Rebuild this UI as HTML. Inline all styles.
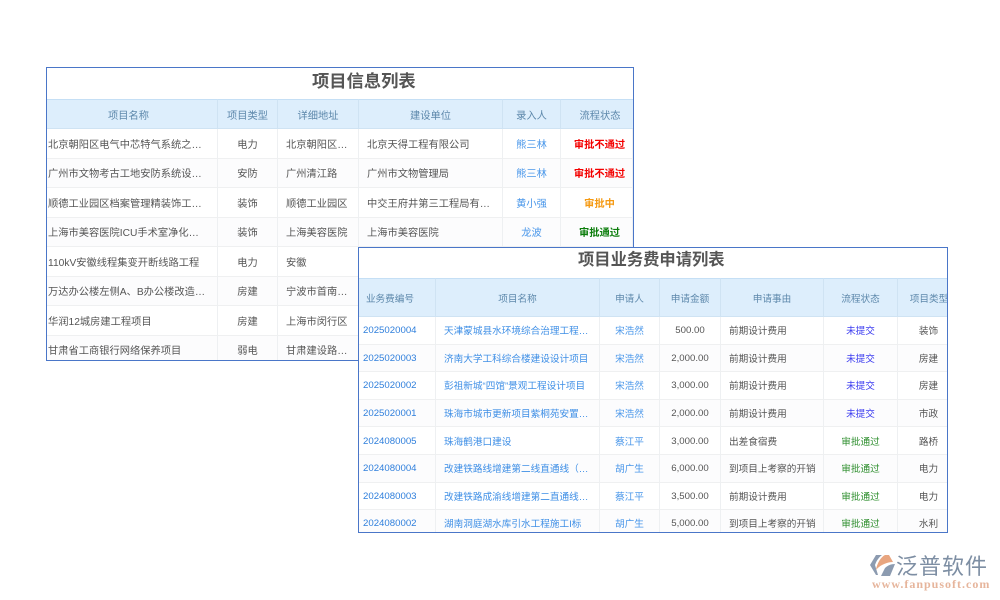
<!DOCTYPE html>
<html lang="zh">
<head>
<meta charset="utf-8">
<style>
html,body{margin:0;padding:0;background:#fff}
body{width:1000px;height:600px;position:relative;overflow:hidden;font-family:"Liberation Sans","Noto Sans CJK SC",sans-serif;font-size:10.2px;color:#555}
.box{position:absolute;box-sizing:border-box;border:1px solid #4a76c8;background:#fff;overflow:hidden}
.title{position:absolute;top:0;text-align:center;font-weight:bold;color:#555;white-space:nowrap}
table{position:absolute;left:0;border-collapse:separate;border-spacing:0;table-layout:fixed}
th{background:#ddeefc;font-weight:normal;color:#5d88ab;border-right:1px solid #cfe3f3;border-top:1px solid #c5dff5;border-bottom:1px solid #cfe3f3;padding:1px 0 0;overflow:hidden;white-space:nowrap;text-align:center}
td{border-right:1px solid #eef0f2;border-bottom:1px solid #eff0f1;padding:0 0 0 8px;white-space:nowrap;overflow:hidden;text-overflow:ellipsis;background:#fff}
tr:nth-child(even) td{background:#fcfcfd}
td.c{text-align:center;padding:0}
.l{color:#4a97ea}
.t1{font-size:10.25px}
.t2{font-size:9.65px}
.t1 td:first-child{padding-left:1px}
.t1 th:first-child{padding-right:7px}
.t1 th:last-child,.t1 td.c:last-child{padding-left:6px}
.t2 th:first-child{padding-right:14px}
.t2 th:last-child,.t2 td.c:last-child{padding-left:5px}
.t2 td.a{padding:1px 0 0 4px;color:#2f7fdc}
.t2 td.m{padding-top:1px}
.t2 td.n{padding-left:8px;color:#3f8fe6}
.r{color:#f40000;font-weight:bold}
.o{color:#f59a13;font-weight:bold}
.g{color:#0b7d0b;font-weight:bold}
.b{color:#3c3cf0}
.g2{color:#2f8f2f}
#logo{position:absolute;left:870px;top:555px}
.lt{position:absolute;left:896px;top:549px;font-size:22px;font-weight:normal;color:#7d8ea3;letter-spacing:1px;white-space:nowrap;font-family:"Liberation Sans","Noto Sans CJK SC",sans-serif}
.lu{position:absolute;left:872px;top:577px;font-family:"Liberation Serif","Noto Serif CJK SC",serif;font-size:12px;font-weight:bold;color:#e6b59c;letter-spacing:1px;white-space:nowrap}
</style>
</head>
<body>

<div class="box" style="left:46px;top:67px;width:588px;height:294px">
<div class="title" style="left:265px;font-size:17.3px;height:31px;line-height:27px">项目信息列表</div>
<table class="t1" style="top:31px;width:586px">
<colgroup><col style="width:171px"><col style="width:60px"><col style="width:81px"><col style="width:144px"><col style="width:58px"><col style="width:72px"></colgroup>
<thead><tr style="height:30px"><th>项目名称</th><th>项目类型</th><th>详细地址</th><th>建设单位</th><th>录入人</th><th style="border-right:0">流程状态</th></tr></thead>
<tbody>
<tr style="height:29.5px"><td>北京朝阳区电气中芯特气系统之…</td><td class="c">电力</td><td>北京朝阳区…</td><td>北京天得工程有限公司</td><td class="c l">熊三林</td><td class="c r">审批不通过</td></tr>
<tr style="height:29.5px"><td>广州市文物考古工地安防系统设…</td><td class="c">安防</td><td>广州清江路</td><td>广州市文物管理局</td><td class="c l">熊三林</td><td class="c r">审批不通过</td></tr>
<tr style="height:29.5px"><td>顺德工业园区档案管理精装饰工…</td><td class="c">装饰</td><td>顺德工业园区</td><td>中交王府井第三工程局有…</td><td class="c l">黄小强</td><td class="c o">审批中</td></tr>
<tr style="height:29.5px"><td>上海市美容医院ICU手术室净化…</td><td class="c">装饰</td><td>上海美容医院</td><td>上海市美容医院</td><td class="c l">龙波</td><td class="c g">审批通过</td></tr>
<tr style="height:29.5px"><td>110kV安徽线程集变开断线路工程</td><td class="c">电力</td><td>安徽</td><td></td><td></td><td></td></tr>
<tr style="height:29.5px"><td>万达办公楼左侧A、B办公楼改造…</td><td class="c">房建</td><td>宁波市首南…</td><td></td><td></td><td></td></tr>
<tr style="height:29.5px"><td>华润12城房建工程项目</td><td class="c">房建</td><td>上海市闵行区</td><td></td><td></td><td></td></tr>
<tr style="height:29.5px"><td>甘肃省工商银行网络保养项目</td><td class="c">弱电</td><td>甘肃建设路…</td><td></td><td></td><td></td></tr>
</tbody>
</table>
</div>

<div class="box" style="left:358px;top:247px;width:590px;height:286px">
<div class="title" style="left:219px;font-size:16.3px;height:30px;line-height:25px">项目业务费申请列表</div>
<table class="t2" style="top:30px;width:596px">
<colgroup><col style="width:77px"><col style="width:164px"><col style="width:60px"><col style="width:61px"><col style="width:103px"><col style="width:74px"><col style="width:57px"></colgroup>
<thead><tr style="height:39px"><th>业务费编号</th><th>项目名称</th><th>申请人</th><th>申请金额</th><th>申请事由</th><th>流程状态</th><th style="border-right:0">项目类型</th></tr></thead>
<tbody>
<tr style="height:27.6px"><td class="a">2025020004</td><td class="n">天津蒙城县水环境综合治理工程…</td><td class="c l">宋浩然</td><td class="c m">500.00</td><td>前期设计费用</td><td class="c b">未提交</td><td class="c">装饰</td></tr>
<tr style="height:27.6px"><td class="a">2025020003</td><td class="n">济南大学工科综合楼建设设计项目</td><td class="c l">宋浩然</td><td class="c m">2,000.00</td><td>前期设计费用</td><td class="c b">未提交</td><td class="c">房建</td></tr>
<tr style="height:27.6px"><td class="a">2025020002</td><td class="n">彭祖新城“四馆”景观工程设计项目</td><td class="c l">宋浩然</td><td class="c m">3,000.00</td><td>前期设计费用</td><td class="c b">未提交</td><td class="c">房建</td></tr>
<tr style="height:27.6px"><td class="a">2025020001</td><td class="n">珠海市城市更新项目紫桐苑安置…</td><td class="c l">宋浩然</td><td class="c m">2,000.00</td><td>前期设计费用</td><td class="c b">未提交</td><td class="c">市政</td></tr>
<tr style="height:27.6px"><td class="a">2024080005</td><td class="n">珠海鹤港口建设</td><td class="c l">蔡江平</td><td class="c m">3,000.00</td><td>出差食宿费</td><td class="c g2">审批通过</td><td class="c">路桥</td></tr>
<tr style="height:27.6px"><td class="a">2024080004</td><td class="n">改建铁路线增建第二线直通线（…</td><td class="c l">胡广生</td><td class="c m">6,000.00</td><td>到项目上考察的开销</td><td class="c g2">审批通过</td><td class="c">电力</td></tr>
<tr style="height:27.6px"><td class="a">2024080003</td><td class="n">改建铁路成渝线增建第二直通线…</td><td class="c l">蔡江平</td><td class="c m">3,500.00</td><td>前期设计费用</td><td class="c g2">审批通过</td><td class="c">电力</td></tr>
<tr style="height:27.6px"><td class="a">2024080002</td><td class="n">湖南洞庭湖水库引水工程施工I标</td><td class="c l">胡广生</td><td class="c m">5,000.00</td><td>到项目上考察的开销</td><td class="c g2">审批通过</td><td class="c">水利</td></tr>
</tbody>
</table>
</div>

<svg id="logo" width="26" height="22" viewBox="0 0 26 22">
<path d="M6 0H12C8 3 6 7 5 10L8 20H6L0 10Z" fill="#8c9bb0"/>
<path d="M6 15C7 8 11 2 15 0H19L23 7C17 7 10 10 6 15Z" fill="#e8a57f"/>
<path d="M11 21L15 13C18 10 22 9 25 9L20 21Z" fill="#8c9bb0"/>
</svg>
<div class="lt">泛普软件</div>
<div class="lu">www.fanpusoft.com</div>

</body>
</html>
